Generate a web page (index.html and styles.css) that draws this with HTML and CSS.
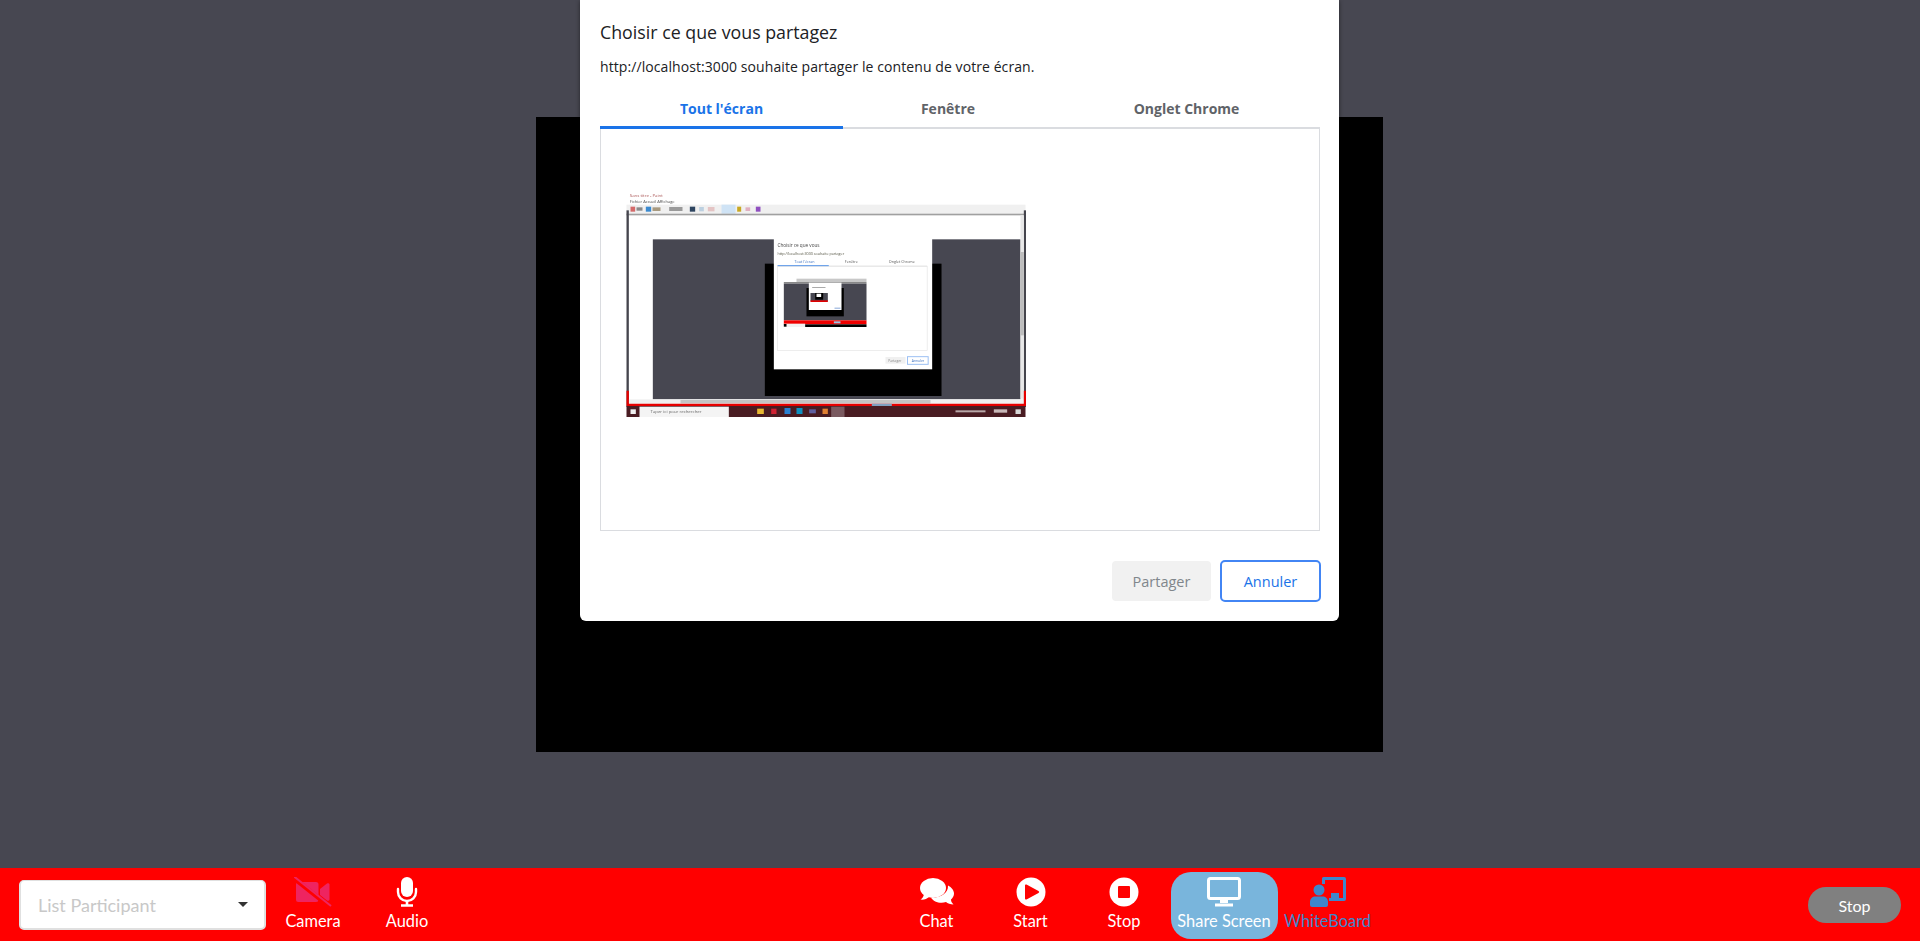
FILE: index.html
```html
<!DOCTYPE html>
<html lang="en">
<head>
    <meta charset="UTF-8">
    <meta name="viewport" content="width=device-width, initial-scale=1.0">
    <title>Share Screen</title>
    <link rel="stylesheet" href="styles.css">
</head>
<body>
    <main class="stage">
        <div class="video"></div>

        <section class="picker">
            <h2 class="picker-title">Choisir ce que vous partagez</h2>
            <p class="picker-text">http://localhost:3000 souhaite partager le contenu de votre écran.</p>
            <div class="tabs">
                <div class="tab tab-active">Tout l'écran</div>
                <div class="tab">Fenêtre</div>
                <div class="tab">Onglet Chrome</div>
            </div>
            <div class="panel">
                <svg class="thumb" viewBox="48 40 1197 678" width="400" height="226">
                    <defs><filter id="soft" x="0" y="0" width="100%" height="100%"><feGaussianBlur stdDeviation="1.6"/></filter></defs>
                    <g filter="url(#soft)">
                        <rect x="48" y="40" width="1197" height="678" fill="#fff"/>
                        <!-- paint window chrome -->
                        <text x="58" y="55" font-size="13" fill="#a55" font-family="Open Sans">Sans titre - Paint</text>
                        <text x="58" y="74" font-size="12" fill="#444" font-family="Open Sans">Fichier Accueil Affichage</text>
                        <rect x="48" y="78" width="1197" height="27" fill="#f0f0f0"/>
                        <rect x="333" y="78" width="42" height="27" fill="#cfe3f5"/>
                        <rect x="60" y="84" width="14" height="15" fill="#d46a6a"/>
                        <rect x="78" y="86" width="18" height="10" fill="#8a8a8a"/>
                        <rect x="106" y="84" width="16" height="15" fill="#3a8ad0"/>
                        <rect x="126" y="86" width="24" height="11" fill="#a89a80"/>
                        <rect x="176" y="85" width="40" height="12" fill="#9a9a9a"/>
                        <rect x="238" y="84" width="16" height="15" fill="#2f4560"/>
                        <rect x="266" y="85" width="14" height="13" fill="#bcd0e0"/>
                        <rect x="292" y="85" width="20" height="13" fill="#e4c4c4"/>
                        <rect x="380" y="84" width="12" height="15" fill="#c8a820"/>
                        <rect x="405" y="86" width="14" height="11" fill="#e0b0c0"/>
                        <rect x="436" y="84" width="14" height="15" fill="#9050c0"/>
                        <rect x="48" y="105" width="1197" height="5" fill="#a0a0a0"/>
                        <rect x="48" y="95" width="7" height="590" fill="#45454e"/>
                        <rect x="1240" y="95" width="7" height="590" fill="#45454e"/>
                        <!-- page under the dialog -->
                        <rect x="127" y="182" width="1103" height="480" fill="#474751"/>
                        <rect x="463" y="255" width="530" height="397" fill="#000"/>
                        <rect x="1230" y="110" width="10" height="550" fill="#e8e8e8"/>
                        <rect x="1230" y="220" width="10" height="250" fill="#bdbdbd"/>
                        <rect x="55" y="662" width="1185" height="13" fill="#f0f0f0"/>
                        <rect x="210" y="664" width="750" height="10" fill="#c4c4c4"/>
                        <path d="M48 636h7v39h1185v-39h7v46H48z" fill="#e60000"/>
                        <!-- taskbar -->
                        <rect x="48" y="682" width="1197" height="33" fill="#4a1c24"/>
                        <rect x="60" y="692" width="16" height="14" fill="#f0f0f0"/>
                        <rect x="87" y="684" width="268" height="31" fill="#f4f4f4"/>
                        <text x="120" y="704" font-size="13" fill="#666" font-family="Open Sans">Taper ici pour rechercher</text>
                        <rect x="440" y="690" width="20" height="16" fill="#e8b830"/>
                        <rect x="482" y="690" width="16" height="16" fill="#d02030"/>
                        <rect x="522" y="688" width="18" height="18" fill="#2a80d0"/>
                        <rect x="558" y="688" width="18" height="18" fill="#1090c0"/>
                        <rect x="596" y="692" width="20" height="12" fill="#6060a0"/>
                        <rect x="636" y="690" width="16" height="16" fill="#e08030"/>
                        <rect x="662" y="684" width="40" height="31" fill="#7a5a60"/>
                        <rect x="784" y="675" width="60" height="7" fill="#80a0c0"/>
                        <rect x="1035" y="695" width="90" height="6" fill="#b8a8a8"/>
                        <rect x="1150" y="692" width="40" height="10" fill="#c8b8b8"/>
                        <rect x="1215" y="692" width="16" height="14" fill="#d8d8d8"/>
                        <!-- dialog inside the capture -->
                        <rect x="490" y="180" width="475" height="392" fill="#fff"/>
                        <text x="501" y="206" font-size="14" fill="#444" font-family="Open Sans">Choisir ce que vous</text>
                        <text x="501" y="228" font-size="11" fill="#554" font-family="Open Sans">http://localhost:3000 souhaite partager</text>
                        <text x="552" y="254" font-size="11" fill="#3a70c0" font-family="Open Sans">Tout l'écran</text>
                        <text x="703" y="254" font-size="11" fill="#555" font-family="Open Sans">Fenêtre</text>
                        <text x="835" y="254" font-size="11" fill="#555" font-family="Open Sans">Onglet Chrome</text>
                        <rect x="501" y="260" width="154" height="3" fill="#2a78e0"/>
                        <rect x="655" y="261" width="295" height="2" fill="#dcdcdc"/>
                        <rect x="501" y="263" width="449" height="252" fill="none" stroke="#e4e4e4" stroke-width="2"/>
                        <!-- second level capture -->
                        <rect x="558" y="300" width="210" height="10" fill="#c8c8c8"/>
                        <rect x="520" y="310" width="248" height="5" fill="#888"/>
                        <rect x="520" y="315" width="248" height="110" fill="#474751"/>
                        <rect x="588" y="328" width="112" height="85" fill="#000"/>
                        <rect x="595" y="312" width="98" height="82" fill="#fff"/>
                        <rect x="600" y="343" width="52" height="25" fill="#474751"/>
                        <rect x="614" y="343" width="24" height="20" fill="#000"/>
                        <rect x="618" y="345" width="14" height="10" fill="#fff"/>
                        <rect x="600" y="365" width="52" height="5" fill="#e00000"/>
                        <rect x="605" y="325" width="40" height="3" fill="#aaa"/>
                        <rect x="672" y="387" width="18" height="3" fill="#88a8d8"/>
                        <rect x="520" y="425" width="248" height="12" fill="#f00000"/>
                        <rect x="670" y="428" width="20" height="6" fill="#9cc4e4"/>
                        <rect x="520" y="435" width="64" height="10" fill="#f2f2f2"/>
                        <rect x="520" y="436" width="8" height="8" fill="#000"/>
                        <rect x="584" y="437" width="184" height="8" fill="#000"/>
                        <!-- dialog buttons -->
                        <rect x="825" y="535" width="60" height="20" fill="#f0f0f0"/>
                        <text x="833" y="549" font-size="10" fill="#888" font-family="Open Sans">Partager</text>
                        <rect x="891" y="534" width="62" height="23" fill="#fff" stroke="#9cc0f4" stroke-width="3"/>
                        <text x="904" y="549" font-size="10" fill="#3a70c0" font-family="Open Sans">Annuler</text>
                    </g>
                </svg>
            </div>
            <div class="picker-actions">
                <button class="btn btn-share">Partager</button>
                <button class="btn btn-cancel">Annuler</button>
            </div>
        </section>
    </main>

    <footer class="toolbar">
        <div class="toolbar-left">
            <div class="participants">
                <span>List Participant</span>
                <span class="caret"></span>
            </div>
            <div class="tool">
                <svg class="tool-icon" viewBox="0 0 38 30">
                    <path d="M2 7.500a2.500 2.500 0 0 1 2.500-2.500H22a2.500 2.500 0 0 1 2.500 2.500v15A2.500 2.500 0 0 1 22 25H4.500A2.500 2.500 0 0 1 2 22.500z" fill="#ee2460"/>
                    <path d="M26 12l7-5.500c1-.7 2.500-.2 2.500 1.200v14.600c0 1.400-1.500 1.900-2.500 1.200l-7-5.500z" fill="#ee2460"/>
                    <path d="M0 1.500L36 30" stroke="#ff0000" stroke-width="4.500"/>
                    <path d="M0 -.5L37 29" stroke="#ee2460" stroke-width="2"/>
                </svg>
                <span>Camera</span>
            </div>
            <div class="tool">
                <svg class="tool-icon" viewBox="0 0 22 30">
                    <rect x="5" y="0" width="12" height="20" rx="6" fill="#fff"/>
                    <path d="M2 12v3a9 9 0 0 0 18 0v-3" fill="none" stroke="#fff" stroke-width="2.400" stroke-linecap="round"/>
                    <path d="M11 24v4M5 28.500h12" stroke="#fff" stroke-width="2.600"/>
                </svg>
                <span>Audio</span>
            </div>
        </div>

        <div class="toolbar-center">
            <div class="tool">
                <svg class="tool-icon" viewBox="0 0 34 30">
                    <ellipse cx="13" cy="11" rx="13" ry="10" fill="#fff"/>
                    <path d="M4 16c0 3-1.500 5.500-3.500 6.500 3 .5 6.500-.5 8.500-2.500z" fill="#fff"/>
                    <path d="M28 8.500c3.500 1.800 6 4.800 6 8 0 2.400-1.200 4.500-3 6 0 2 1 3.500 2.500 5-3 0-6-1-7.500-2.500-1.500.5-3 .7-4.500.7-4.500 0-8.500-2-10.500-5 9.500.5 17.500-4.500 17-12.200z" fill="#fff"/>
                </svg>
                <span>Chat</span>
            </div>
            <div class="tool">
                <svg class="tool-icon" viewBox="0 0 30 30">
                    <circle cx="15" cy="15" r="14.500" fill="#fff"/>
                    <path d="M9 8.500a1 1 0 0 1 1.500-.9L22.500 14a1.200 1.200 0 0 1 0 2L10.500 22.400a1 1 0 0 1-1.500-.9z" fill="#ff0000"/>
                </svg>
                <span>Start</span>
            </div>
            <div class="tool tool-narrow">
                <svg class="tool-icon" viewBox="0 0 30 30">
                    <circle cx="15" cy="15" r="14.500" fill="#fff"/>
                    <rect x="9" y="9" width="12" height="12" rx="1" fill="#ff0000"/>
                </svg>
                <span>Stop</span>
            </div>
            <div class="tool tool-share">
                <svg class="tool-icon" viewBox="0 0 34 30">
                    <rect x="1.500" y="1.500" width="31" height="20" rx="2" fill="none" stroke="#fff" stroke-width="3"/>
                    <path d="M13 23h8v3h-8zM8 26.500h18v3H8z" fill="#fff"/>
                </svg>
                <span>Share Screen</span>
            </div>
            <div class="tool tool-board">
                <svg class="tool-icon" viewBox="0 0 36 30">
                    <path d="M13.500 0H34a2 2 0 0 1 2 2v20a2 2 0 0 1-2 2H19v-3h14V3H15v4h-3V1.500A1.500 1.500 0 0 1 13.500 0z" fill="#3f86cb"/>
                    <path d="M21 16h8v6h-8z" fill="#3f86cb"/>
                    <circle cx="9" cy="13" r="5.500" fill="#3f86cb"/>
                    <path d="M0 25c0-3.500 2.500-5.500 5.500-5.500h7c3 0 5.500 2 5.500 5.500v3a2 2 0 0 1-2 2H2a2 2 0 0 1-2-2z" fill="#3f86cb"/>
                </svg>
                <span>WhiteBoard</span>
            </div>
        </div>

        <button class="stop-btn">Stop</button>
    </footer>
</body>
</html>
```

FILE: styles.css
```css
* {
    box-sizing: border-box;
}

body {
    margin: 0;
    height: 100vh;
    display: flex;
    flex-direction: column;
    overflow: hidden;
    font-family: "Lato", sans-serif;
}

.stage {
    position: relative;
    flex: 1;
    display: flex;
    justify-content: center;
    padding-top: 117px;
    background-color: #474751;
}

.video {
    width: 847px;
    height: 635px;
    margin-right: 1px;
    background-color: #000;
}

/* chrome screen picker */
.picker {
    position: absolute;
    top: 0;
    left: 580px;
    width: 759px;
    height: 621px;
    padding: 0 19px 0 20px;
    display: flex;
    flex-direction: column;
    background-color: #fff;
    border-radius: 0 0 6px 6px;
    box-shadow: 0 1px 4px rgba(0, 0, 0, 0.5);
    font-family: "Open Sans", sans-serif;
}

.picker-title {
    margin: 20px 0 0;
    height: 24px;
    line-height: 24px;
    font-size: 17.8px;
    font-weight: 400;
    color: #202124;
}

.picker-text {
    margin: 11px 0 0;
    height: 24px;
    line-height: 24px;
    font-size: 14px;
    letter-spacing: 0.08px;
    color: #202124;
}

.tabs {
    display: grid;
    grid-template-columns: 243px 210px 1fr;
    margin-top: 10px;
    height: 40px;
    border-bottom: 2px solid #dadce0;
}

.tab {
    height: 40px;
    line-height: 40px;
    text-align: center;
    font-size: 14px;
    font-weight: 700;
    color: #5f6368;
}

.tab-active {
    color: #1a73e8;
    border-bottom: 3px solid #1a73e8;
}

.panel {
    height: 402px;
    padding: 63px 0 0 25px;
    border: 1px solid #dadce0;
    border-top: 0;
}

.thumb {
    display: block;
}

.picker-actions {
    display: flex;
    justify-content: flex-end;
    align-items: center;
    gap: 9px;
    margin: 29px -1px 0 0;
}

.btn {
    height: 40px;
    width: 99px;
    font-family: "Open Sans", sans-serif;
    font-size: 14.5px;
    border-radius: 4px;
    border: 0;
    padding: 0;
}

.btn-share {
    background-color: #f1f1f1;
    color: #80868b;
}

.btn-cancel {
    height: 42px;
    width: 101px;
    background-color: #fff;
    color: #1a73e8;
    border: 2px solid #4285f4;
    border-radius: 5px;
}

/* bottom bar */
.toolbar {
    height: 73px;
    padding: 0 19px;
    display: flex;
    justify-content: space-between;
    background-color: #ff0000;
}

.toolbar-left,
.toolbar-center {
    display: flex;
    align-items: flex-start;
}

.toolbar-left {
    padding-right: 5px;
}

.participants {
    margin-top: 12px;
    width: 247px;
    height: 50px;
    padding: 0 16px 0 17px;
    display: flex;
    align-items: center;
    justify-content: space-between;
    background-color: #fff;
    border: 2px solid #e0e0e0;
    border-top-width: 1px;
    border-radius: 5px;
    font-size: 18px;
    color: #c8c8c8;
}

.caret {
    border-left: 5px solid transparent;
    border-right: 5px solid transparent;
    border-top: 5px solid #333;
}

.tool {
    width: 94px;
    height: 67px;
    margin-top: 4px;
    padding-top: 5px;
    display: flex;
    flex-direction: column;
    align-items: center;
    font-size: 16.4px;
    line-height: 20px;
    color: #fff;
    white-space: nowrap;
}

.tool-icon {
    display: block;
    height: 30px;
    margin-bottom: 4px;
}

.tool-narrow {
    width: 93px;
}

.tool-share {
    width: 107px;
    background-color: #79b5dc;
    border-radius: 20px;
}

.tool-board {
    width: 100px;
    color: #3f86cb;
}

.stop-btn {
    margin-top: 19px;
    width: 93px;
    height: 36px;
    background-color: #808080;
    color: #fff;
    border: 0;
    border-radius: 18px;
    font-family: "Lato", sans-serif;
    font-size: 16px;
}
```
